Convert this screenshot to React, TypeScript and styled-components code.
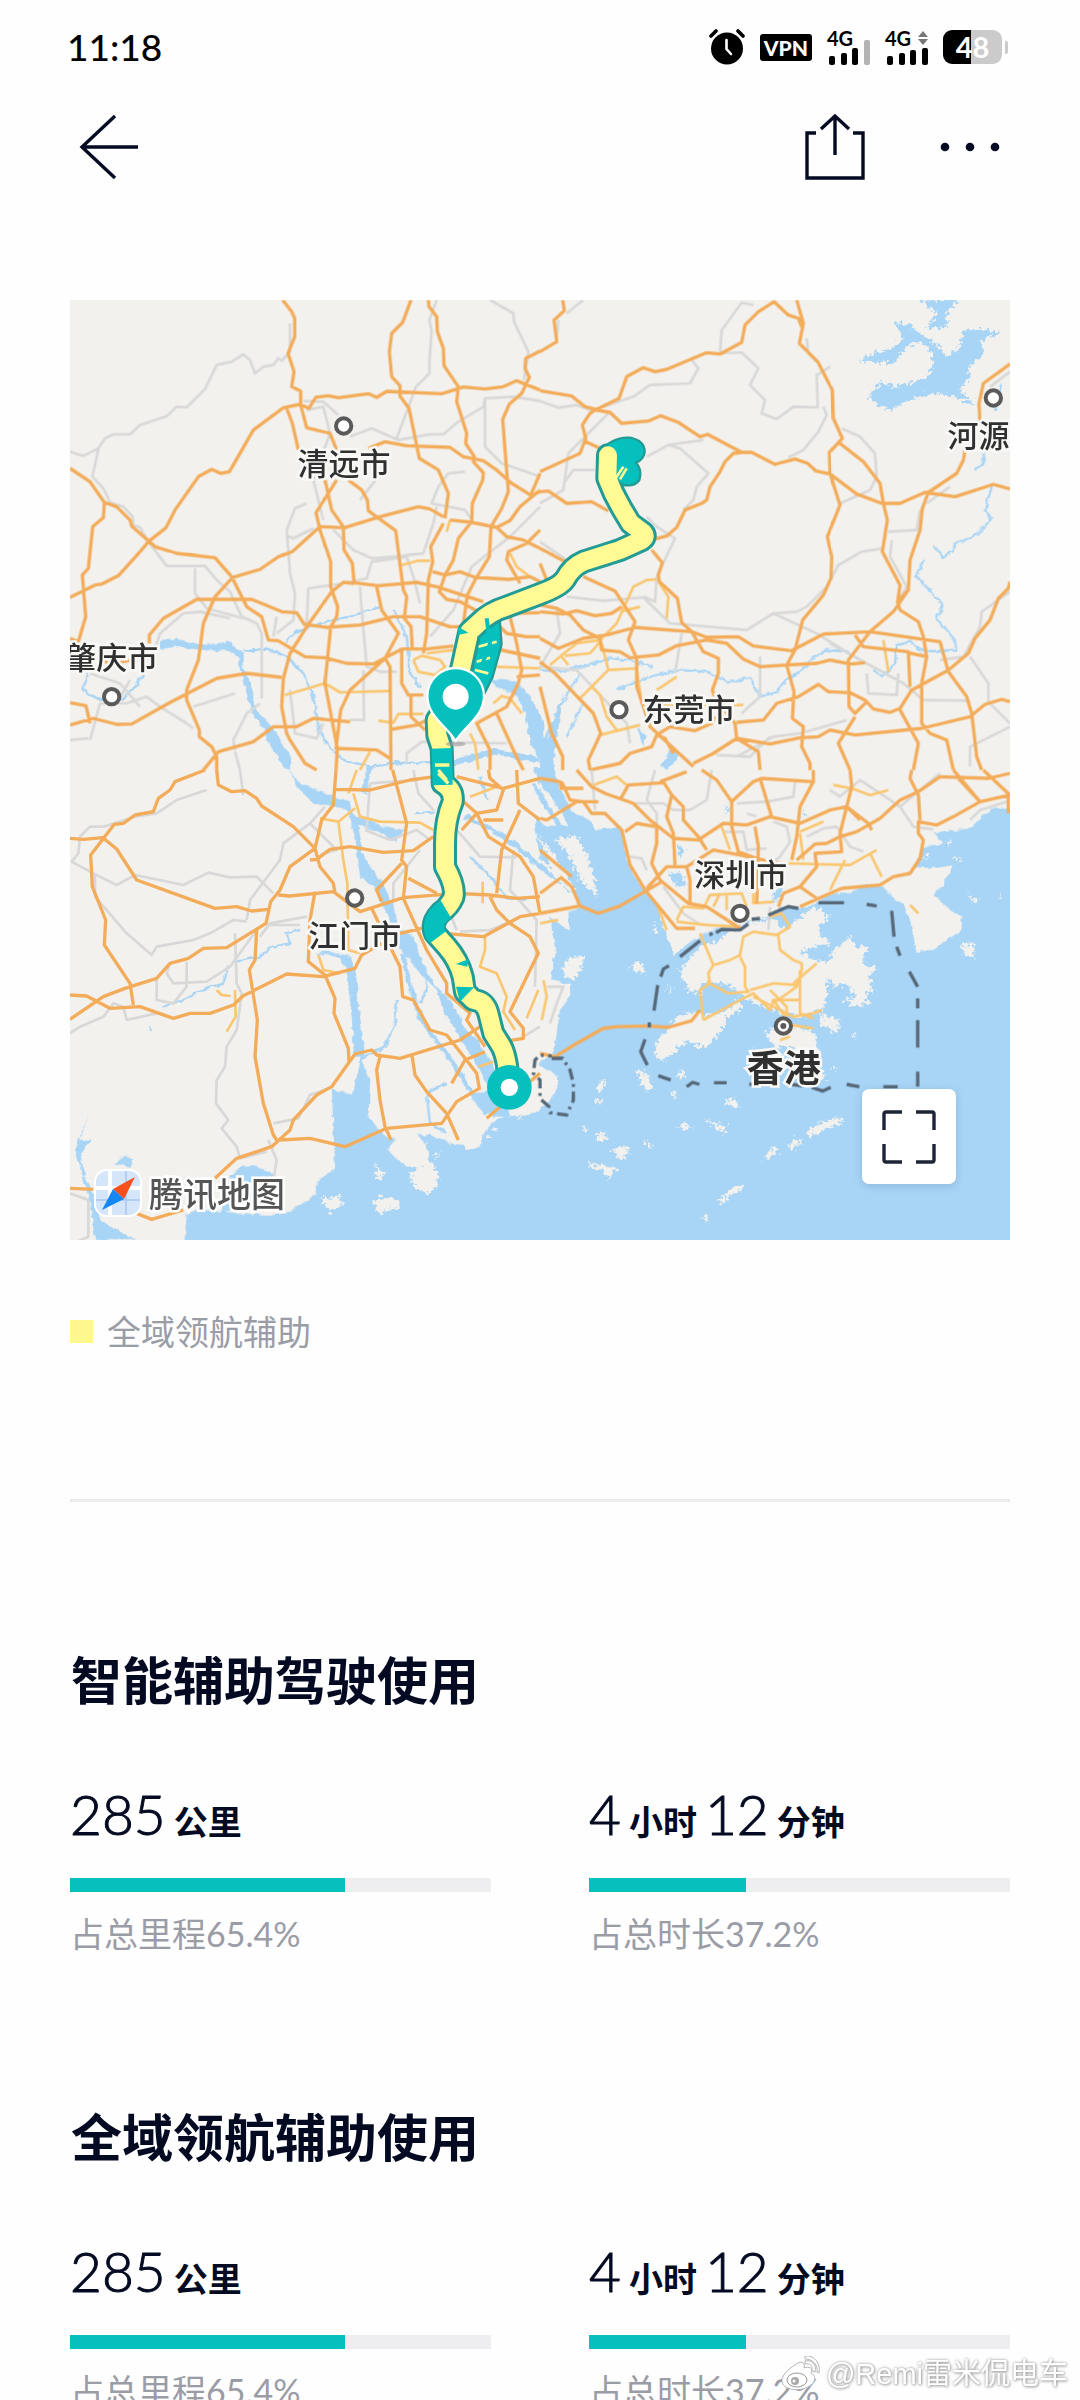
import React from "react";
import styled, { createGlobalStyle } from "styled-components";

const ink = "#030a22";
const teal = "#06c0bd";
const cjk = '"Noto Sans CJK SC", sans-serif';

const GlobalStyle = createGlobalStyle`
  * { box-sizing: border-box; }
  body {
    margin: 0;
    background: #fefefe;
    color: ${ink};
    font-family: Lato, ${cjk};
  }
`;

/* ---------- page frame ---------- */

const Screen = styled.div`
  display: flex;
  flex-direction: column;
  height: 100vh;
  overflow: hidden;
`;

const StatusBar = styled.header`
  display: flex;
  flex: none;
  align-items: center;
  justify-content: space-between;
  height: 94px;
  padding: 0 72px 0 67px;
`;

const Clock = styled.time`
  color: #000;
  font-size: 37px;
  font-weight: 500;
  line-height: 48px;
`;

const StatusIcons = styled.div`
  display: flex;
  align-items: center;
  gap: 15px;
`;

const VpnTag = styled.span`
  padding: 0 4px;
  border-radius: 3px;
  background: #000;
  color: #fff;
  font-size: 21px;
  font-weight: 900;
  line-height: 27px;
`;

const Signal = styled.div`
  display: flex;
  flex-direction: column;
  width: 43px;
  color: #000;
`;

const SignalTop = styled.div`
  display: flex;
  align-items: center;
  justify-content: space-between;
  font-size: 20px;
  font-weight: 700;
  line-height: 18px;
`;

const Bars = styled.div`
  display: flex;
  align-items: flex-end;
  justify-content: space-between;
  height: 18px;
  padding: 0 0 0 2px;
`;

const Bar = styled.i<{ $h: number; $off?: boolean }>`
  width: 6px;
  height: ${(p) => p.$h}px;
  border-radius: 2px;
  background: ${(p) => (p.$off ? "#b3b3b3" : "#000")};
`;

const Battery = styled.div`
  display: flex;
  align-items: center;
  gap: 3px;
`;

const BatteryBody = styled.span`
  width: 59px;
  border-radius: 9px;
  background: linear-gradient(90deg, #000 48%, #cbcbcb 48%);
  color: #fff;
  font-size: 29px;
  font-weight: 700;
  line-height: 34px;
  text-align: center;
`;

const BatteryNub = styled.i`
  width: 3px;
  height: 13px;
  border-radius: 0 2px 2px 0;
  background: #cbcbcb;
`;

const NavBar = styled.nav`
  display: flex;
  flex: none;
  align-items: center;
  justify-content: space-between;
  height: 106px;
  padding: 0 70px 0 68px;
`;

const NavActions = styled.div`
  display: flex;
  gap: 55px;
`;

const IconButton = styled.button`
  display: grid;
  place-items: center;
  width: 80px;
  height: 80px;
  padding: 0;
  border: 0;
  background: none;
  color: ${ink};
`;

const Content = styled.main`
  flex: 1;
  min-height: 0;
  padding: 100px 70px 80px;
  overflow-y: auto;
  scrollbar-width: none;
`;

/* ---------- map ---------- */

const MapFrame = styled.section`
  position: relative;
  overflow: hidden;
  aspect-ratio: 1;
  background: #f2f1ed;
`;

const MapArt = styled.svg`
  display: block;
  width: 100%;
  height: 100%;
`;

const PlaceLabel = styled.span<{ $x: number; $y: number; $big?: boolean }>`
  position: absolute;
  left: ${(p) => ((p.$x - 30) / 2820) * 100}%;
  top: ${(p) => ((p.$y - 36) / 2820) * 100}%;
  transform: translate(-50%, -50%);
  color: #303030;
  font-family: ${cjk};
  font-size: ${(p) => (p.$big ? 37 : 31)}px;
  font-weight: ${(p) => (p.$big ? 700 : 500)};
  line-height: 48px;
  white-space: nowrap;
  -webkit-text-stroke: 5px #f8f8f6;
  paint-order: stroke fill;
`;

const MapBrand = styled.div`
  position: absolute;
  left: 24px;
  bottom: 23px;
  display: flex;
  align-items: center;
  gap: 7px;
  color: #555;
  font-family: ${cjk};
  font-size: 34px;
  font-weight: 500;
  line-height: 48px;
  -webkit-text-stroke: 5px #fff;
  paint-order: stroke fill;
`;

const ExpandButton = styled.button`
  position: absolute;
  right: 54px;
  bottom: 56px;
  display: grid;
  place-items: center;
  width: 94px;
  height: 95px;
  padding: 0;
  border: 0;
  border-radius: 7px;
  background: #fff;
  color: #1e2438;
  box-shadow: 0 2px 8px rgba(40, 80, 120, 0.2);
`;

/* ---------- statistics ---------- */

const Legend = styled.div`
  display: flex;
  align-items: center;
  gap: 14px;
  margin: 66px 0 0;
  color: #9a9ca6;
  font-family: ${cjk};
  font-size: 34px;
  font-weight: 400;
  line-height: 50px;
`;

const Swatch = styled.i`
  width: 23px;
  height: 23px;
  background: #fff88f;
`;

const Divider = styled.hr`
  height: 3px;
  margin: 143px 0 0;
  border: 0;
  background: #ebebec;
`;

const Block = styled.section`
  padding: 138px 0 0;
`;

const Heading = styled.h2`
  margin: 0;
  padding: 0 0 0 1px;
  font-family: ${cjk};
  font-size: 51px;
  font-weight: 700;
  line-height: 76px;
`;

const StatGrid = styled.div`
  display: grid;
  grid-template-columns: 1fr 1fr;
  gap: 98px;
  margin: 62px 0 0;
`;

const Stat = styled.div`
  display: flex;
  flex-direction: column;
`;

const Value = styled.p`
  display: flex;
  align-items: baseline;
  gap: 8px;
  height: 72px;
  margin: 0;
  line-height: 72px;
`;

const Figure = styled.span`
  font-family: Lato, sans-serif;
  font-size: 55px;
  font-weight: 300;
  -webkit-text-stroke: 1px ${ink};
`;

const Unit = styled.span`
  font-family: ${cjk};
  font-size: 34px;
  font-weight: 700;
`;

const Track = styled.div`
  height: 14px;
  margin: 28px 0 0;
  background: #eeeef0;
`;

const Fill = styled.div`
  height: 100%;
  background: ${teal};
`;

const Caption = styled.p`
  margin: 17px 0 0;
  color: #9a9ca6;
  font-size: 34px;
  font-weight: 400;
  line-height: 50px;
`;

const Watermark = styled.div`
  position: fixed;
  right: 12px;
  bottom: 6px;
  display: flex;
  align-items: center;
  gap: 6px;
  color: #fff;
  font-family: "Liberation Sans", ${cjk};
  font-size: 29px;
  line-height: 40px;
  text-shadow: 0 0 3px #999, 1px 1px 3px #aaa;
`;

/* ---------- map geometry: four tiles of 1440 units ---------- */

type Tile = { x: number; y: number; minor: string; city: string; main: string };

const tiles: Tile[] = [
  {
    x: 0,
    y: 0,
    minor:
      "M30,485 70,498 115,475 135,445 160,433 210,433 240,405 320,378 350,350 380,352 435,297 470,225 515,215 550,193 570,210 585,250 610,230 640,225 655,205 665,212 690,185 690,100 M115,478 97,560 130,595 150,637 190,650 218,680 220,705 240,712 265,755 320,828 435,828 470,870 510,905 545,980 590,1000 605,1030 605,1225 M405,835 405,910 440,955 550,985 M1130,30 1108,90 1115,125 1108,215 1108,250 1068,290 1010,445 M1290,30 1360,70 1362,95 1405,185 1392,270 M730,333 790,335 835,375 M870,440 935,415 1015,450 1110,433 1150,433 1195,395 1270,350 1275,325 1360,320 1440,333 M1275,330 1275,470 1325,520 1370,535 1440,560 M970,540 900,630 M1215,545 1165,550 1135,590 1115,640 1215,660 1240,695 M740,640 705,655 680,720 690,850 705,910 700,990 650,1030 M680,735 700,745 760,715 M820,720 880,780 935,805 1030,797 1090,790 1120,700 1130,650 M740,1000 745,895 850,880 920,865 935,815 1040,800 M900,890 905,960 920,1130 960,1145 1010,1145 M910,1140 912,1290 870,1290 M1440,650 1350,740 1285,790 1235,830 1180,960 1110,1040 M280,1090 300,1030 370,970 420,965 510,985 M90,1350 120,1240 200,1240 260,1220 300,1250 380,1300 400,1315 M30,1350 85,1345 M400,1250 525,1210 M525,1380 520,1350 560,1270 600,1240 M640,1040 650,980 M525,1385 540,1440 M690,1200 705,1330 770,1345 790,1300 M1040,1420 1040,1390 1085,1355 1340,1360 M1040,800 1060,860 1080,940 M740,360 790,350 810,430 760,570 790,690 M170,1240 210,1170 M90,1150 180,1180 240,1250",
    city: "M675,1215 795,1180 840,1207 990,1203 M1060,1110 1085,1097 1140,1110 1155,1130 1125,1155 1075,1145 1060,1110 M955,1292 1000,1298 1015,1272 1090,1272 M1025,825 1075,812 1110,812 M1350,790 1370,830 1410,860 M930,1385 900,1440 M1230,1330 1245,1360 1255,1440 M1100,1090 1180,1080 M1310,1130 1440,1135 M1300,1240 1325,1218 1350,1225 1385,1270 M1170,690 1160,725",
    main: "M668,30 695,65 704,85 704,140 684,190 702,245 695,290 722,303 722,345 740,413 810,430 830,480 M30,535 90,575 133,637 170,650 210,690 215,708 285,770 350,790 465,803 515,860 560,950 605,980 625,1050 655,1052 735,1100 795,1103 860,1120 940,1122 1025,1077 1100,1077 1180,1068 M133,637 130,683 98,710 85,835 67,855 77,980 55,1055 30,1045 M30,922 105,885 125,882 175,857 240,785 265,755 318,713 345,660 415,560 455,538 482,550 508,545 580,420 670,353 720,343 747,355 767,322 805,317 835,323 925,311 950,322 980,304 1145,311 1210,291 1275,297 1330,290 1370,272 1440,300 M1053,30 1028,97 995,130 988,185 995,260 1020,287 1020,318 1047,355 1078,505 1135,540 1165,610 1155,685 M1105,30 1107,50 1130,80 1132,125 1150,175 1152,227 1195,290 1190,335 1220,430 1217,460 1243,500 1240,515 1270,548 1268,570 1237,640 1235,695 1195,745 1180,810 1155,855 1138,905 1160,928 1200,935 1300,990 1340,1030 1400,1040 1440,1040 M1440,183 1397,205 1395,235 1408,262 1385,310 1348,342 1328,388 1335,480 1345,605 1325,655 1293,710 1288,800 1245,870 1222,915 1210,1000 M925,475 975,455 1040,467 1170,472 1210,500 1270,512 1310,540 1355,580 1415,617 1440,605 M680,355 697,400 715,480 M795,570 815,660 850,710 852,780 877,820 882,875 M830,570 768,668 780,720 812,815 812,890 833,950 830,980 812,1010 795,1180 832,1375 828,1440 M865,570 905,600 922,630 925,662 1007,722 1030,900 1040,920 1033,985 1053,1010 1057,1080 M515,863 600,838 655,800 697,785 780,710 853,713 960,680 1075,650 1110,657 1150,680 M1170,690 1235,697 1310,712 1350,692 1380,650 1440,600 M1310,712 1340,740 1390,750 1440,775 M1440,720 1400,760 1345,785 1340,810 1380,880 M1440,550 1410,620 M1150,700 1112,770 1118,815 1105,870 1100,1030 1090,1090 M1118,845 1155,855 1200,845 1245,862 1345,868 1410,860 1440,875 M268,1060 268,1035 310,985 410,928 575,928 665,965 710,968 733,1003 800,1012 900,1005 1000,980 1080,980 1170,1010 1200,1010 M515,865 465,920 430,1000 415,1110 380,1200 380,1230 418,1320 418,1340 455,1370 470,1400 470,1440 M882,878 955,887 1070,877 1130,890 1270,935 M882,880 850,877 815,905 740,1010 690,1090 670,1165 665,1250 680,1330 690,1350 735,1420 770,1440 M30,1305 100,1285 170,1303 215,1302 325,1240 470,1165 560,1150 665,1162 M30,1238 78,1247 90,1300 M430,1440 475,1385 580,1355 640,1310 710,1310 760,1285 870,1295 M950,890 965,960 1015,1030 975,1105 990,1130 993,1440 M975,1105 870,1200 842,1260 828,1375 950,1380 990,1405 M1025,1080 1025,1180 1045,1215 1090,1215 M1053,1215 1053,1280 1095,1320 M993,1318 1070,1305 1100,1290 M1350,980 1370,1060 1385,1140 1375,1180 1340,1250 1250,1300 1290,1380 1290,1440 M1370,1160 1440,1155 M1310,1270 1360,1380 1390,1440 M1300,1075 1440,1105 M1340,970 1440,968 M80,1095 150,1120 220,1110",
  },
  {
    x: 1440,
    y: 0,
    minor:
      "M130,30 80,70 M640,45 605,38 545,120 540,190 605,187 655,235 630,285 675,330 665,370 710,387 760,350 833,352 830,255 870,230 M55,90 50,150 M0,333 55,353 110,345 155,362 280,320 330,285 450,280 475,235 455,210 M850,350 860,375 835,425 790,480 745,502 M205,370 145,430 85,490 70,600 0,640 M70,580 100,540 165,540 M320,500 385,465 490,450 M385,465 420,475 505,550 470,590 460,630 430,660 M905,415 960,440 1005,490 1010,560 990,600 900,640 M800,145 805,190 830,215 M320,680 350,710 405,745 350,860 345,935 310,920 M0,755 80,810 M80,920 190,932 310,922 390,1000 620,1020 700,970 770,965 800,950 860,890 895,825 965,785 1030,775 M700,970 830,1030 910,1080 M1045,725 1130,720 1140,660 M1055,750 1050,800 1100,890 1070,940 M1160,640 1230,590 M1410,245 1350,290 M1410,905 1325,965 1320,1010 1270,1100 1200,1110 M50,960 60,1030 0,1130 110,1140 260,1300 270,1360 M425,1030 405,1150 M660,1100 660,1220 605,1270 M1290,1100 1345,1180 1345,1235 1410,1300 M980,1150 985,1210 1070,1215 1075,1150 M870,1060 1090,1180 1150,1230 1290,1232 M590,1400 700,1340 780,1330 920,1290 M1410,1310 1290,1370 1290,1430 M530,1395 630,1400 690,1340",
    city: "M355,875 385,920 380,985 M350,868 320,870 280,890 230,1000 180,1050 110,1060 60,1100 30,1125 M300,950 240,965 M75,1097 150,1090 180,1055 M65,1100 85,1125 M185,1060 205,1140 290,1135 305,1240 M205,1140 120,1225 M155,1190 180,1215 200,1280 230,1320 M180,1335 300,1305 M350,1200 410,1160 M1030,1050 1045,1145 M370,1245 610,1245",
    main: "M68,30 73,62 42,90 50,155 0,185 M0,302 95,318 135,350 170,358 237,325 260,260 310,233 345,245 380,238 500,188 540,192 605,157 615,105 655,65 702,35 745,75 775,85 785,110 M770,30 790,100 778,160 833,215 877,300 880,385 907,445 868,487 870,550 900,645 862,740 875,800 873,865 850,915 788,990 765,1080 740,1125 762,1205 757,1285 790,1310 785,1370 810,1420 810,1440 M0,545 120,490 137,445 127,405 150,370 165,360 210,367 245,400 325,393 362,377 415,397 480,440 503,433 605,487 635,487 705,523 765,507 803,520 828,543 870,552 950,612 1025,640 1080,640 1155,607 1245,620 1360,583 1410,597 M0,605 25,603 80,640 155,635 205,663 M137,455 180,475 M605,487 580,490 555,515 540,545 510,590 500,630 485,640 435,660 410,712 380,738 345,747 M335,780 367,818 355,855 358,875 412,925 425,998 455,1025 490,1085 535,1105 535,1150 517,1200 523,1220 M900,460 970,515 1020,580 1030,640 1042,690 1027,785 1080,885 1073,935 1105,900 1110,810 1140,720 1147,655 1165,607 1250,550 1270,510 1275,480 M1410,222 1330,280 1317,340 1320,400 M1410,875 1405,895 1375,925 1350,990 1305,1045 1285,1090 1225,1140 1115,1200 1080,1255 1050,1267 1000,1257 975,1230 930,1208 865,1205 835,1183 775,1220 710,1240 670,1290 590,1297 M1105,900 1060,965 990,1025 925,1110 927,1250 945,1270 980,1235 M1073,935 1080,960 1135,995 1150,1040 1160,1100 1145,1180 1145,1300 1170,1330 1220,1350 1240,1440 M0,945 50,955 90,975 130,1020 180,1045 185,1080 240,1085 270,1103 355,1095 410,1067 500,1050 560,1060 610,1107 660,1130 740,1125 830,1120 870,1110 930,1122 975,1118 M0,965 70,972 110,962 165,977 215,970 245,950 M130,860 225,903 285,995 265,1050 290,1105 290,1190 330,1310 460,1430 M0,1045 55,1075 130,1045 200,1035 285,1012 455,1025 500,1042 595,1040 640,1068 755,1082 850,1032 990,1025 1200,1055 1225,1145 1280,1220 1295,1270 1310,1400 1325,1440 M945,1035 970,1070 1105,1085 1110,1190 M1105,1088 1160,1100 M0,775 75,815 M0,820 20,870 M0,1115 45,1150 160,1270 182,1330 145,1410 150,1440 M0,1190 35,1330 68,1400 68,1440 M150,1440 240,1420 270,1390 335,1370 350,1335 390,1310 465,1322 515,1300 525,1280 M350,1335 375,1345 400,1390 M460,1420 520,1390 590,1345 690,1362 780,1343 835,1340 870,1320 945,1335 1145,1315 1290,1280 1335,1243 1385,1228 1410,1235 M525,1225 585,1300 590,1345 655,1385 660,1440 M945,1280 895,1360 930,1440 M1080,1260 1135,1360 1120,1440",
  },
  {
    x: 0,
    y: 1440,
    minor:
      "M540,0 550,75 M440,60 350,90 290,130 225,140 130,170 90,170 60,200 55,250 35,275 100,310 170,345 225,315 370,345 445,308 510,322 590,320 640,370 M105,310 105,380 200,490 275,555 290,530 400,510 450,490 520,450 560,455 M560,450 570,390 660,270 670,220 750,160 795,110 M330,580 320,610 340,640 440,635 510,590 590,480 M290,630 290,690 340,700 380,650 380,575 M30,790 60,770 130,740 160,700 190,710 200,750 290,730 M525,490 530,640 545,670 530,780 500,830 495,890 470,930 468,1000 505,1050 485,1075 530,1130 540,1165 620,1145 M750,160 830,240 780,255 M640,1060 715,1045 750,975 820,950 M625,1110 650,1170 640,1230 M600,500 630,460 740,440 M620,465 720,465 M920,180 930,40 M930,40 1070,30 M915,180 990,210 1070,180 1110,210 M1190,180 1230,225 1260,260 1370,262 M1000,390 1000,340 1080,240 M1190,480 1150,380 M1360,240 1350,360 1430,450 1425,650 M1060,0 1075,70 1120,120 M30,1270 85,1290 85,1400 40,1420 M1390,800 1440,770 M1200,485 1290,480 1340,460",
    city: "M865,70 890,0 M880,70 900,140 960,155 1080,158 1120,180 M780,145 835,155 850,270 862,340 865,540 900,550 M885,115 835,155 M1275,500 1275,540 1260,590 1310,610 1340,680 1330,725 1365,780 M1400,745 1435,660 M470,660 485,675 512,678 M525,660 527,740 500,785 M775,555 790,600 840,610 M1268,335 1268,400 M1230,80 1310,50 M1255,890 1300,875",
    main: "M470,0 475,45 515,65 555,62 590,85 605,108 700,170 765,235 780,290 820,340 825,370 M435,0 345,35 330,60 295,85 280,125 225,135 190,160 163,163 92,255 97,350 137,450 133,525 210,640 220,705 M30,205 70,208 128,203 170,237 230,330 465,415 530,410 575,423 625,418 M765,235 690,290 660,360 632,395 618,460 500,533 430,535 385,565 330,580 290,625 195,655 130,680 30,748 M30,675 80,678 150,715 240,710 340,745 390,730 450,730 520,705 550,677 680,612 790,620 885,595 905,555 965,520 M590,480 585,570 568,600 592,750 585,860 610,1000 640,1095 650,1110 M828,0 820,105 785,150 765,235 M655,375 690,378 820,365 900,425 1030,383 1190,370 1290,375 1370,385 1440,380 M828,58 930,60 1050,30 1125,20 M998,0 1040,160 1025,270 1040,290 1030,385 1100,540 1160,640 1160,670 1230,730 1220,750 1275,830 M750,270 770,268 810,238 870,230 970,247 1060,242 1120,200 M1025,280 950,360 965,395 M1045,325 1130,370 M765,365 750,450 745,575 795,615 825,685 822,730 865,835 867,875 M935,415 995,540 1020,590 1028,680 1060,690 1110,780 1160,795 1215,865 1250,910 1258,955 1190,995 1145,1060 980,1075 855,1130 750,1105 660,1110 M465,1225 530,1165 635,1130 690,1080 700,1050 770,975 815,950 885,852 935,840 950,855 1020,865 1200,810 1260,770 M960,860 950,900 960,990 975,1070 993,1110 M1055,850 1065,915 1100,965 1160,1030 1195,1110 M1275,845 1215,870 1175,940 M230,1330 275,1348 370,1320 M30,1255 100,1258 M1020,490 1085,475 M1285,0 1290,25 1330,60 1310,120 1250,130 1205,180 M1205,90 1250,130 1285,200 1380,260 1420,320 1440,430 M1370,0 1375,100 1440,150 M1380,120 1325,240 1310,370 M1290,380 1310,420 1350,460 1410,500 1435,550 1410,600 1350,725 1390,775 1390,805 1330,815 M1150,490 1270,500 1380,440 1440,430 M1190,20 1330,55 1440,25 M1280,1045 1440,910 M1270,150 1330,150",
  },
  {
    x: 1440,
    y: 1440,
    minor:
      "M345,0 320,90 350,130 350,180 M280,100 370,100 400,120 450,120 500,90 515,0 M590,100 680,95 760,80 765,35 M620,130 650,140 M550,185 610,185 620,240 680,235 M700,155 740,170 750,215 720,260 680,290 M1200,10 1080,110 1120,170 1180,178 M800,200 850,175 890,170 930,230 970,245 M270,260 305,265 320,300 M370,350 430,430 475,460 M690,410 685,480 M870,60 900,80 960,30 1050,90 1080,110 M20,650 70,650 50,700 30,760 M155,0 165,120 M1290,150 1320,120 1400,95",
    city: "M480,490 520,585 505,610 510,640 480,660 490,750 M520,585 570,570 600,555 610,500 640,485 710,495 750,470 725,430 690,440 M600,560 615,590 615,650 625,665 565,670 500,635 M630,660 700,640 770,645 M715,495 720,540 760,570 785,580 785,600 770,650 700,700 M490,750 600,690 640,670 690,720 700,690 735,740 M830,580 760,640 M780,600 780,730 820,745 M700,690 780,690 M640,680 760,740 820,730 845,720 M410,450 430,410 490,415 510,375 605,370 620,410 M545,170 570,240 M520,410 540,370 M560,370 560,420 M640,370 640,400 700,395 M780,185 850,155 M740,280 930,285 1010,240 M915,270 870,360 M990,250 1025,320 M790,270 780,190 M10,630 20,680 5,750 M350,400 380,480 M755,765 820,775 M880,45 935,55 990,75 1045,60 M720,810 750,800 M160,45 230,20 260,45 M1110,405 1135,430 M0,460 55,450 M410,455 500,465 600,470 M690,660 740,710 740,740",
    main: "M370,35 395,75 380,140 400,190 405,285 M395,75 430,110 430,150 475,200 500,240 M0,25 60,35 65,60 M110,0 155,50 195,70 280,100 330,150 400,205 475,210 550,160 620,165 690,140 780,160 870,120 920,110 960,150 M950,185 900,200 860,220 825,222 770,270 M360,35 440,5 M370,38 265,45 240,90 M485,0 530,30 575,95 575,170 595,245 650,265 M575,95 640,35 665,25 820,35 780,110 770,200 755,270 M660,25 695,140 M820,0 820,40 M645,170 655,230 650,400 M65,35 90,90 130,95 155,130 195,130 245,180 270,285 315,360 410,475 465,475 M255,185 290,160 350,170 350,220 335,280 360,330 445,400 500,410 600,475 M320,355 380,290 440,290 520,240 600,255 740,285 M440,290 450,330 450,400 M0,430 120,408 175,430 240,408 365,335 M60,320 95,350 120,408 M0,240 95,320 M0,370 60,325 M930,0 935,50 920,110 900,190 905,245 825,250 830,290 780,350 730,370 715,410 M1410,10 1345,25 1200,20 1135,65 1080,90 1020,145 950,185 M1115,0 1110,25 1135,75 1140,150 M1255,25 1320,95 1240,140 1190,165 1135,155 1135,190 1150,210 1140,265 1110,310 1060,320 1020,345 905,355 870,370 780,410 M1240,0 1320,95 1410,75 1330,0 M1405,80 1405,130 M920,110 985,160 995,180 M780,350 830,385 M0,850 45,860 110,820 190,775 230,770 325,768 385,772 455,752 480,720 M0,145 20,150 110,95 175,95 M70,55 130,55",
  },
];

const at = (x: number, y: number) => `translate(${x} ${y})`;

const route =
  "M1644,496 L1642,565 L1662,612 L1685,655 L1712,700 L1750,728 Q1760,740 1746,750 L1680,780 L1570,815 Q1535,830 1515,868 Q1500,890 1440,912 L1340,950 Q1290,965 1255,1000 L1228,1025 L1205,1130 L1180,1220 L1130,1290 L1132,1335 L1145,1375 L1147,1440 L1148,1480 Q1182,1500 1178,1535 Q1155,1590 1155,1660 L1155,1730 Q1188,1790 1180,1822 Q1168,1850 1142,1868 Q1112,1900 1125,1930 L1160,1970 Q1195,2010 1208,2060 L1215,2105 L1240,2130 Q1275,2132 1285,2170 L1300,2230 L1325,2270 Q1345,2310 1345,2390";

const cityDots = [
  [851, 408],
  [155, 1220],
  [2800, 324],
  [1677, 1259],
  [884, 1824],
  [2040, 1870],
  [2170, 2208],
];

const places = [
  { name: "清远市", x: 852, y: 522 },
  { name: "肇庆市", x: 155, y: 1104 },
  { name: "河源市", x: 2802, y: 438 },
  { name: "东莞市", x: 1887, y: 1259 },
  { name: "江门市", x: 884, y: 1938 },
  { name: "深圳市", x: 2042, y: 1755 },
  { name: "香港", x: 2171, y: 2334, big: true },
];

function RouteMap() {
  return (
    <MapArt viewBox="30 30 2820 2820" fill="none" aria-hidden="true">
      <defs>
        <filter id="coast" x="0" y="0" width="100%" height="100%">
          <feTurbulence type="fractalNoise" baseFrequency="0.09" numOctaves="2" seed="4" />
          <feDisplacementMap in="SourceGraphic" scale="36" xChannelSelector="R" yChannelSelector="G" />
        </filter>
        <filter id="shore" x="0" y="0" width="100%" height="100%">
          <feTurbulence type="fractalNoise" baseFrequency="0.05" numOctaves="2" seed="9" />
          <feDisplacementMap in="SourceGraphic" scale="16" xChannelSelector="R" yChannelSelector="G" />
        </filter>
      </defs>

      {/* sea and rivers */}
      <g filter="url(#shore)">
        <g transform={at(1440, 1440)} fill="#a8d4f6">
          <path d="M-1070,1450 -1060,1330 -1020,1320 -820,1335 -750,1325 -670,1270 -670,1235 -615,1195 -625,955 -600,965 -560,970 -555,940 -535,860 -510,940 -515,1040 -465,1100 -435,1110 -460,1140 -400,1190 -330,1190 -340,1120 -370,1095 -330,1095 -270,1120 -225,1125 -225,1140 -180,1130 -170,1100 -150,1060 -110,1040 -50,1035 0,1020 20,1000 55,950 50,915 20,900 -5,880 40,850 50,790 60,720 90,680 90,645 30,630 45,540 30,440 90,485 85,430 115,410 100,360 60,310 0,270 -20,130 20,170 85,170 60,110 -10,30 -20,-10 30,-10 40,30 65,80 95,125 150,150 165,180 240,170 250,200 265,290 310,360 350,400 370,470 400,555 475,500 500,490 530,475 600,470 620,455 690,440 720,410 800,415 860,375 920,370 980,345 1030,350 1060,385 1090,400 1110,450 1130,545 1180,540 1265,480 1265,440 1220,410 1180,375 1210,345 1235,290 1120,290 1140,260 1145,230 1210,220 1180,190 1290,175 1350,115 1450,110 1450,1450Z" />
        </g>
        <g fill="#a8d4f6">
          <path d="M300,1055 345,1045 430,1065 510,1055 548,1090 548,1130 570,1180 590,1260 635,1310 692,1400 690,1440 670,1430 620,1350 615,1320 575,1270 555,1190 540,1140 535,1100 500,1082 430,1080 345,1070 300,1078Z" />
          <path d="M1285,1165 1370,1175 1410,1220 1450,1290 1450,1420 1410,1360 1395,1270 1370,1215 1310,1190Z" />
          <path transform={at(0, 1440)} d="M685,0 720,40 770,60 870,95 875,130 960,165 1030,180 1010,215 960,190 895,165 910,260 960,330 1000,400 1010,470 1060,500 1080,560 1120,640 1170,690 1200,740 1210,780 1190,790 1150,720 1130,660 1080,610 1040,560 1010,520 985,440 940,350 900,320 885,200 860,120 760,100 720,60Z" />
          <path transform={at(0, 1440)} d="M770,550 830,560 860,590 865,650 875,740 882,860 915,860 895,700 887,600 870,560 800,540Z" />
          <path transform={at(0, 1440)} d="M85,1030 60,1110 95,1110 60,1150 75,1220 105,1290 120,1350 180,1385 230,1410 105,1410 90,1300 45,1140Z M160,1180 190,1155 220,1170 210,1190Z M510,1215 545,1190 590,1187 625,1205 650,1220 560,1300 480,1330 500,1250Z M1180,740 1260,820 1300,890 1350,1040 1290,1040 1240,970 1290,960 1250,880 1200,810Z" />
          <path transform={at(1440, 0)} d="M0,1330 20,1350 70,1210 40,1420 60,1500 90,1550 60,1560 0,1480Z M290,1310 320,1340 310,1365Z M400,1370 415,1400 385,1440 360,1430Z" />
        </g>
        <g stroke="#a8d4f6" strokeWidth="7">
          <path d="M550,1085 620,1075 680,1100 730,1150 760,1220 780,1330 820,1385 850,1410 930,1430 1000,1420 1150,1415 M780,1000 870,980 960,950 M680,1060 700,1030 780,1000 M1000,960 1040,1040 1050,1150 1080,1190 M260,1140 225,1190 190,1225 130,1230 90,1215 70,1195 85,1150" />
          <path strokeWidth="18" d="M1150,1425 1250,1400 1300,1385 1440,1410 M930,1430 910,1510" />
          <path transform={at(1440, 0)} d="M1355,590 1335,660 1355,685 1310,735 1245,760 1240,785 1210,800 1180,770 M1150,810 1130,860 1210,945 1190,985 1245,1050 1245,1080 1150,1085 1110,1055 1070,1065 1065,1120 1030,1160 1000,1140 M930,1085 860,1080 820,1100 790,1140 740,1170 710,1205 660,1220 630,1165 560,1175 500,1145 410,1140 330,1160 230,1200 M340,1130 270,1110 210,1105 130,1130 60,1145 0,1140 M1335,440 1330,520 1305,540 M1385,280 1365,360 M120,1150 60,1250 0,1380 M130,1240 80,1340" />
          <path transform={at(0, 1440)} d="M310,710 370,690 430,660 490,640 505,590 M530,575 600,560 640,530 690,520 680,490 720,480 M265,765 275,785 M1010,690 1005,760 975,830 905,865 M1160,940 1100,970 1110,1060 1160,1090 M1095,620 1100,660 1080,700 M1065,130 1130,125 M1230,260 1300,330 1340,385 1400,390 M1260,20 1280,90" />
          <path transform={at(0, 1440)} strokeWidth="14" d="M1030,550 1040,610 1080,740 1120,800 1180,880 1240,980 1280,1030 M1215,140 1300,180 1360,220 1440,290 1560,380 M1420,40 1480,140 1560,260" />
        </g>
      </g>

      {/* reservoirs and ragged islands */}
      <g filter="url(#coast)">
        <path transform={at(1440, 0)} fill="#a8d4f6" d="M985,318 1025,275 1060,290 1110,280 1160,265 1180,230 1170,180 1140,155 1100,170 1060,220 1000,215 955,213 1010,185 1050,180 1090,145 1060,95 1110,105 1140,130 1200,170 1215,200 1260,170 1270,120 1310,115 1385,130 1320,150 1335,185 1290,230 1285,265 1260,300 1310,350 1230,315 1200,310 1130,320 1090,340 1050,360 1010,345Z M1190,70 1140,30 1250,30 1215,80 1225,110 1160,115Z" />
        <g transform={at(1440, 1440)} fill="#a8d4f6">
          <path d="M415,225 435,235 430,255 410,250Z M385,305 420,310 440,345 410,350Z M550,110 570,120 555,125Z M785,115 800,130 790,138Z M700,360 730,350 710,400 700,390Z" />
        </g>
        <g transform={at(1440, 1440)} fill="#f2f1ed">
          <path d="M420,600 480,530 540,510 570,480 630,455 700,445 730,480 750,470 790,430 830,410 870,440 830,480 870,520 810,530 780,550 860,580 880,545 930,500 945,530 985,530 965,580 1015,590 990,610 995,660 960,700 920,640 880,650 860,620 860,680 840,730 900,750 890,790 840,760 850,720 780,740 700,720 620,690 560,640 490,640 480,670 450,665 425,620Z" />
          <path d="M345,860 350,810 390,770 410,740 450,725 480,730 500,740 560,720 600,690 605,715 560,740 540,790 500,830 470,830 440,810 400,850 370,870Z M675,790 710,765 760,765 830,790 838,860 800,870 750,830 700,830Z M630,840 650,850 680,900 650,900Z M830,890 860,920 840,930Z" />
          <path d="M70,590 90,560 130,560 125,600 100,630 75,620Z M270,590 300,575 320,612 290,605Z M285,895 320,910 340,950 320,970 300,930Z M410,915 435,895 430,925Z M555,990 590,985 595,1010 560,1005Z M410,1075 435,1055 460,1075Z M490,1045 560,1070 550,1090 520,1070Z M670,1165 700,1130 720,1140 690,1160Z M740,1130 765,1105 790,1115 760,1135Z M795,1090 830,1065 900,1040 910,1055 850,1080 810,1100Z M215,1135 260,1130 265,1150 240,1165Z M150,1175 190,1185 235,1195 205,1225 180,1195 150,1195Z M165,1090 200,1090 205,1110 175,1110Z M540,1290 580,1250 610,1240 605,1260 570,1275 540,1305Z M480,1345 500,1335 505,1360Z M175,950 190,925 195,950 175,970Z M310,1110 340,1125 330,1140Z M1260,525 1305,520 1300,570 1265,540Z M385,965 410,965 405,985Z M165,990 190,990 180,1005Z M125,1070 145,1075 135,1090Z M1280,370 1310,390 1300,400Z M1240,265 1260,265 1255,278Z M1215,215 1235,215 1225,228Z M1145,260 1165,260 1155,272Z M340,460 355,475 345,490Z M385,640 395,665 385,680Z M935,790 950,790 945,805Z M870,890 890,885 885,900Z M910,690 970,670 990,700 940,710Z M1375,370 1388,372 1382,384Z" />
          <path d="M45,205 110,200 140,250 160,320 175,385 120,330 90,260Z M-10,190 40,250 90,330 110,380 50,330Z" />
        </g>
        <path transform={at(0, 1440)} fill="#f2f1ed" d="M1050,1215 1075,1185 1110,1170 1135,1210 1130,1250 1100,1275 1060,1250Z M940,1290 970,1280 1020,1290 1015,1320 985,1315 960,1335 945,1310Z M785,1285 840,1280 845,1305 810,1330Z M945,1175 972,1215 950,1240Z M1125,1160 1140,1145 1135,1165Z M1280,1105 1290,1095 1295,1108Z M1290,1080 1310,1070 1315,1085Z M1370,1045 1390,1035 1385,1052Z" />
      </g>

      {/* roads */}
      <g strokeLinejoin="round">
        {tiles.map((t) => (
          <g key={`${t.x}-${t.y}`} transform={at(t.x, t.y)}>
            <path d={t.minor} stroke="#d8d8d8" strokeWidth="8" />
            <path d={t.city} stroke="#fac66f" strokeWidth="8" />
            <path d={t.main} stroke="#f3ac5a" strokeWidth="10" />
          </g>
        ))}
      </g>

      {/* boundaries */}
      <g transform={at(1440, 1440)} stroke="#566878" strokeWidth="10">
        <path d="M528,488 545,478 600,480 625,462 M635,448 660,445 M685,435 745,410 775,415 M508,494 518,490 M835,398 912,398 M980,403 1010,408 M1055,422 1062,500 M1070,530 1080,557 M1108,605 1133,650 M1133,685 1133,715 M1133,750 1133,833 M1133,905 1133,950 M480,512 420,560 M387,587 370,597 362,620 M353,645 342,722 M328,757 328,772 M315,808 302,845 322,885 M355,917 392,930 M440,950 458,937 478,943 M522,938 560,938 M628,943 715,943 M755,943 790,948 M815,952 848,963 872,952 M920,943 958,950 M1030,950 1073,950" />
        <path strokeDasharray="34 14 8 14" d="M35,865 68,865 90,900 100,940 100,990 80,1035 30,1028 27,1010 10,995 0,985 0,930 -20,910 -15,870 0,855 35,858" />
      </g>

      {/* driven route */}
      <g strokeLinejoin="round">
        <path d="M1285,995 L1290,1060 L1265,1150 L1235,1210" stroke="#239b95" strokeWidth="76" />
        <path d="M1285,995 L1290,1060 L1265,1150 L1235,1210" stroke="#06c0bd" strokeWidth="62" />
        <path d="M1255,1070 1310,1055 M1250,1115 1290,1103 M1245,1140 1285,1150" stroke="#fffa93" strokeWidth="8" />
        <path d={route} stroke="#239b95" strokeWidth="72" strokeLinecap="round" />
        <path d="M1636,468 Q1670,440 1710,443 Q1755,452 1754,487 Q1750,510 1728,518 Q1747,540 1738,570 Q1725,590 1690,585 L1650,560Z" fill="#06c0bd" stroke="#239b95" strokeWidth="7" />
        <path d={route} stroke="#fffa93" strokeWidth="54" strokeLinecap="round" />
        <path d="M1280,985 L1290,1060 L1268,1120" stroke="#06c0bd" strokeWidth="12" />
        <path d="M1667,565 1690,530 M1680,568 1700,535" stroke="#fffa93" strokeWidth="8" />
        <path d="M1145,1375 L1147,1440 L1148,1485 M1158,1858 Q1112,1885 1125,1930 L1134,1942" stroke="#06c0bd" strokeWidth="60" />
        <path d="M1125,1425 1168,1425 M1135,1440 1160,1470 M1135,1450 1165,1480" stroke="#fffa93" strokeWidth="10" />
        <path d="M1195,1010 1225,1028 1195,1035Z M1188,2022 1225,2008 1222,2030Z M1188,2090 1242,2092 1200,2135Z" fill="#06c0bd" />
        <ellipse cx="1187" cy="1362" rx="30" ry="7" fill="#999" opacity="0.6" />
        <path d="M1187,1354 C1165,1312 1102,1280 1102,1219 A85 85 0 0 1 1272 1219 C1272,1280 1209,1312 1187,1354Z" fill="#06c0bd" stroke="#fff" strokeWidth="7" />
        <circle cx="1187" cy="1220" r="39" fill="#fff" />
        <circle cx="1348" cy="2392" r="67" fill="#06c0bd" />
        <circle cx="1348" cy="2392" r="26" fill="#fff" />
      </g>

      {cityDots.map(([x, y]) => (
        <circle key={x} cx={x} cy={y} r="23" fill="#fff" stroke="#5a5a5a" strokeWidth="12" />
      ))}
      <circle cx="2170" cy="2208" r="9" fill="#5a5a5a" />
    </MapArt>
  );
}

/* ---------- small drawings ---------- */

const AlarmIcon = () => (
  <svg width="36" height="36" viewBox="0 0 36 36" aria-hidden="true">
    <circle cx="18" cy="19.500" r="16" fill="#000" />
    <path d="M2 7 L7 2 M34 7 L29 2" stroke="#000" strokeWidth="3.600" strokeLinecap="round" />
    <path d="M17.500 11 V20 L22 25" stroke="#fff" strokeWidth="2.600" fill="none" strokeLinecap="round" />
  </svg>
);

const DataArrows = () => (
  <svg width="10" height="14" viewBox="0 0 10 14" aria-hidden="true">
    <path d="M5 0 L10 6 H0Z M5 14 L10 8 H0Z" fill="#777" />
  </svg>
);

const BackIcon = () => (
  <svg width="60" height="66" viewBox="0 0 60 66" fill="none" stroke="currentColor" strokeWidth="3.400" aria-hidden="true">
    <path d="M37 2 L4 33 L37 64 M4 33 H60" />
  </svg>
);

const ShareIcon = () => (
  <svg width="60" height="68" viewBox="0 0 60 68" fill="none" stroke="currentColor" strokeWidth="3.400" aria-hidden="true">
    <path d="M11 20 H2 V65 H58 V20 H48 M30 42 V3 M16 16 L30 3 L44 16" />
  </svg>
);

const MoreIcon = () => (
  <svg width="60" height="10" viewBox="0 0 60 10" fill="currentColor" aria-hidden="true">
    <circle cx="5" cy="5" r="4.300" />
    <circle cx="30" cy="5" r="4.300" />
    <circle cx="55" cy="5" r="4.300" />
  </svg>
);

const ExpandIcon = () => (
  <svg width="54" height="54" viewBox="0 0 54 54" fill="none" stroke="currentColor" strokeWidth="3.400" aria-hidden="true">
    <path d="M2 20 V4 Q2 2 4 2 H20 M34 2 H50 Q52 2 52 4 V20 M52 34 V50 Q52 52 50 52 H34 M20 52 H4 Q2 52 2 50 V34" />
  </svg>
);

const CompassLogo = () => (
  <svg width="48" height="48" viewBox="0 0 48 48" aria-hidden="true">
    <rect width="48" height="48" rx="13" fill="#fff" />
    <rect x="2" y="2" width="44" height="44" rx="11" fill="#d5e6fb" />
    <path d="M16 2 V46 M2 19 H46" stroke="#fff" strokeWidth="4" />
    <path d="M32 2 V46 M2 31 H46" stroke="#b3cdf3" strokeWidth="2" />
    <path d="M41 8 L30 30 L19 20Z" fill="#f8501c" />
    <path d="M8 41 L19 20 L30 30Z" fill="#1487f5" />
  </svg>
);

const WeiboLogo = () => (
  <svg width="40" height="36" viewBox="0 0 40 36" aria-hidden="true">
    <g fill="#fff" stroke="#b4b4b4" strokeWidth="1">
      <path d="M15 9 C20 4 26 6 24 12 C29 10 34 12 31 17 C36 19 36 25 31 29 C23 36 4 35 2 26 C1 20 8 13 15 9Z" />
      <path d="M25 5 C32 3 37 9 35 16 L32 15 C33 10 30 7 25 8Z M25 0 C35 -1 41 8 39 17 L37 16 C38 9 33 3 25 3Z" />
    </g>
    <ellipse cx="17" cy="24" rx="10" ry="7" fill="#fff" stroke="#999" />
    <circle cx="15" cy="25" r="4" fill="#a8a8a8" />
    <circle cx="14" cy="25" r="1.500" fill="#fff" />
  </svg>
);

/* ---------- content ---------- */

type StatData = { parts: [string, string][]; label: string; percent: number };

const stats: StatData[] = [
  { parts: [["285", "公里"]], label: "占总里程", percent: 65.4 },
  { parts: [["4", "小时"], ["12", "分钟"]], label: "占总时长", percent: 37.2 },
];

function StatBlock({ title }: { title: string }) {
  return (
    <Block>
      <Heading>{title}</Heading>
      <StatGrid>
        {stats.map((s) => (
          <Stat key={s.label}>
            <Value>
              {s.parts.map(([n, unit]) => (
                <React.Fragment key={unit}>
                  <Figure>{n}</Figure>
                  <Unit>{unit}</Unit>
                </React.Fragment>
              ))}
            </Value>
            <Track>
              <Fill style={{ width: `${s.percent}%` }} />
            </Track>
            <Caption>{`${s.label}${s.percent}%`}</Caption>
          </Stat>
        ))}
      </StatGrid>
    </Block>
  );
}

export default function App() {
  return (
    <Screen>
      <GlobalStyle />
      <StatusBar>
        <Clock>11:18</Clock>
        <StatusIcons>
          <AlarmIcon />
          <VpnTag>VPN</VpnTag>
          <Signal>
            <SignalTop>4G</SignalTop>
            <Bars>
              <Bar $h={9} />
              <Bar $h={12} />
              <Bar $h={17} />
              <Bar $h={25} $off />
            </Bars>
          </Signal>
          <Signal>
            <SignalTop>
              4G
              <DataArrows />
            </SignalTop>
            <Bars>
              <Bar $h={9} />
              <Bar $h={12} />
              <Bar $h={15} />
              <Bar $h={17} />
            </Bars>
          </Signal>
          <Battery>
            <BatteryBody>48</BatteryBody>
            <BatteryNub />
          </Battery>
        </StatusIcons>
      </StatusBar>
      <NavBar>
        <IconButton aria-label="返回">
          <BackIcon />
        </IconButton>
        <NavActions>
          <IconButton aria-label="分享">
            <ShareIcon />
          </IconButton>
          <IconButton aria-label="更多">
            <MoreIcon />
          </IconButton>
        </NavActions>
      </NavBar>
      <Content>
        <MapFrame>
          <RouteMap />
          {places.map((p) => (
            <PlaceLabel key={p.name} $x={p.x} $y={p.y} $big={p.big}>
              {p.name}
            </PlaceLabel>
          ))}
          <MapBrand>
            <CompassLogo />
            腾讯地图
          </MapBrand>
          <ExpandButton aria-label="全屏">
            <ExpandIcon />
          </ExpandButton>
        </MapFrame>
        <Legend>
          <Swatch />
          全域领航辅助
        </Legend>
        <Divider />
        <StatBlock title="智能辅助驾驶使用" />
        <StatBlock title="全域领航辅助使用" />
      </Content>
      <Watermark>
        <WeiboLogo />
        @Remi雷米侃电车
      </Watermark>
    </Screen>
  );
}
